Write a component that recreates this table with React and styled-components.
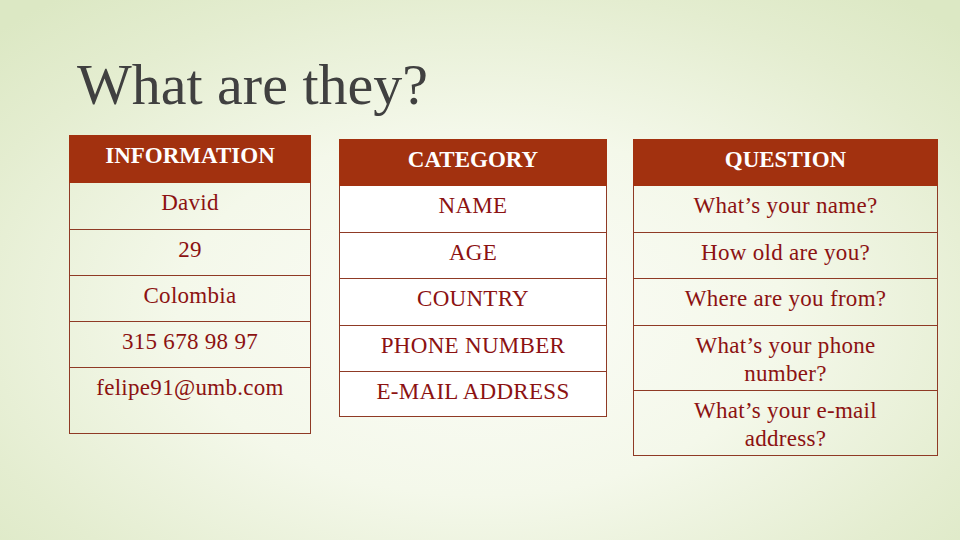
import styled, { createGlobalStyle } from "styled-components";

const Global = createGlobalStyle`
  html, body { margin: 0; padding: 0; }
  body { width: 960px; height: 540px; overflow: hidden; }
`;

const tables = [
  {
    title: "INFORMATION",
    width: 242, top: 0, head: 48, fill: "transparent",
    rows: [["David", 46], ["29", 46], ["Colombia", 46], ["315 678 98 97", 46], ["felipe91@umb.com", 66]],
  },
  {
    title: "CATEGORY",
    width: 268, top: 4, head: 47, fill: "#ffffff",
    rows: [["NAME", 46], ["AGE", 46], ["COUNTRY", 47], ["PHONE NUMBER", 46], ["E-MAIL ADDRESS", 45]],
  },
  {
    title: "QUESTION",
    width: 305, top: 4, head: 47, fill: "transparent",
    rows: [["What’s your name?", 46], ["How old are you?", 46], ["Where are you from?", 47], ["What’s your phone number?", 65], ["What’s your e-mail address?", 64]],
  },
];

export default function App() {
  return (
    <>
      <Global />
      <Slide>
        <Title>What are they?</Title>
        <Tables>
          {tables.map((t) => (
            <Table key={t.title} $width={t.width} $top={t.top}>
              <Head $h={t.head}>{t.title}</Head>
              {t.rows.map(([text, h], i) => (
                <Cell key={text} $h={h} $fill={t.fill} $first={i === 0}>
                  <CellText $wrap={t.title === "QUESTION"}>{text}</CellText>
                </Cell>
              ))}
            </Table>
          ))}
        </Tables>
      </Slide>
    </>
  );
}

const Slide = styled.div`
  width: 960px;
  height: 540px;
  box-sizing: border-box;
  padding: 56px 0 0 69px;
  background: radial-gradient(ellipse 70% 75% at 50% 58%, #fbfcf7 0%, #f4f8ea 45%, #e4edd0 80%, #dce8c4 100%);
  font-family: "Liberation Serif", "Times New Roman", serif;
`;

const Title = styled.h1`
  margin: 0 0 21px 8px;
  font-size: 58px;
  line-height: 58px;
  font-weight: normal;
  color: #404040;
`;

const Tables = styled.div`
  display: flex;
  align-items: flex-start;
  gap: 28px;
`;

const Table = styled.div`
  width: ${(p) => p.$width}px;
  margin-top: ${(p) => p.$top}px;
  box-sizing: border-box;
  border: 1px solid #8f3a25;
  display: flex;
  flex-direction: column;
  &:last-child { margin-left: -2px; }
`;

const Head = styled.div`
  height: ${(p) => p.$h}px;
  box-sizing: border-box;
  margin: -1px -1px 0;
  padding-top: 7px;
  background: #a2310f;
  color: #ffffff;
  font-weight: bold;
  font-size: 23px;
  line-height: 28px;
  text-align: center;
`;

const Cell = styled.div`
  min-height: ${(p) => p.$h}px;
  box-sizing: border-box;
  padding: 6px 10px 2px;
  background: ${(p) => p.$fill};
  border-top: ${(p) => (p.$first ? "none" : "1px solid #8f3a25")};
  text-align: center;
`;

const CellText = styled.div`
  margin: 0 auto;
  max-width: ${(p) => (p.$wrap ? "210px" : "none")};
  color: #8c1212;
  font-size: 23px;
  line-height: 28px;
  letter-spacing: 0.3px;
`;
